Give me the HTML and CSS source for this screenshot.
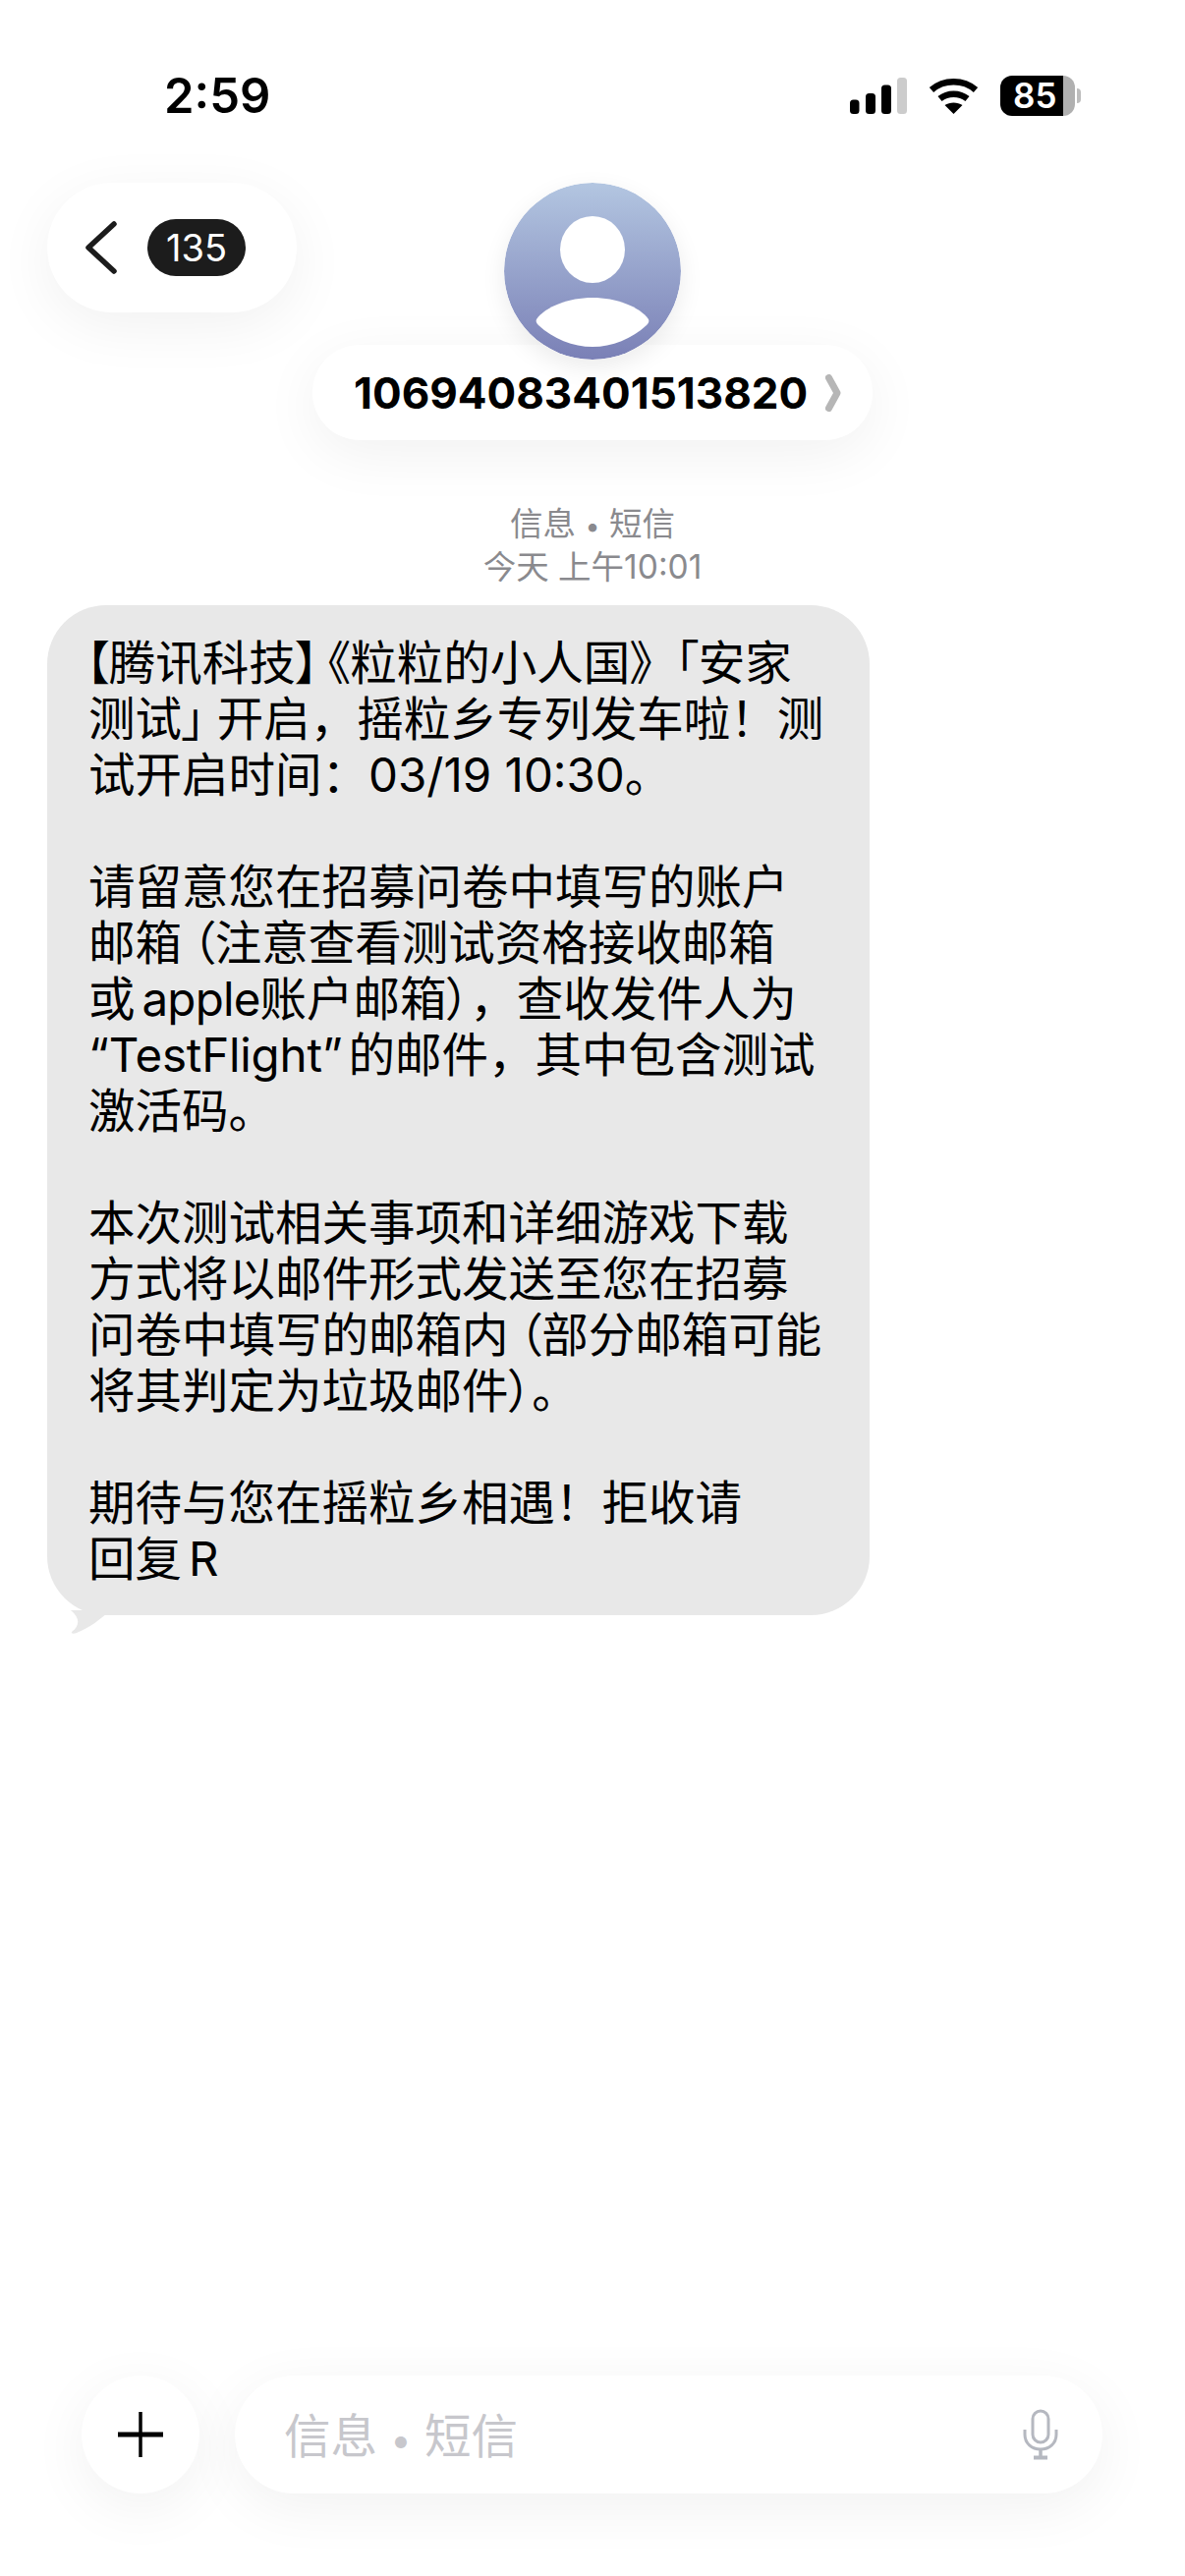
FILE: index.html
```html
<!DOCTYPE html>
<html lang="zh-CN">
<head>
    <meta charset="UTF-8">
    <meta name="viewport" content="width=device-width, initial-scale=1.0">
    <title>短信</title>
    <link rel="stylesheet" href="styles.css">
</head>
<body>
    <div class="status-bar">
        <span class="time">2:59</span>
        <div class="status-icons">
            <svg class="signal" width="58" height="37" viewBox="0 0 58 37">
                <rect x="0" y="22.500" width="9.500" height="14.500" rx="3.500" fill="#000"/>
                <rect x="16" y="16" width="10" height="21" rx="3.500" fill="#000"/>
                <rect x="32" y="7.500" width="10" height="29.500" rx="3.500" fill="#000"/>
                <rect x="48" y="0" width="10" height="37" rx="3.500" fill="#ccc"/>
            </svg>
            <svg class="wifi" width="51" height="37" viewBox="0 0 51 37">
                <path d="M3 12.500C15.500 1.500 35.500 1.500 48 12.500" fill="none" stroke="#000" stroke-width="6.500" stroke-linecap="butt"/>
                <path d="M11.500 21.500C19.500 15 31.500 15 39.500 21.500" fill="none" stroke="#000" stroke-width="6.500" stroke-linecap="butt"/>
                <path d="M25.500 37L16.500 28C21.500 24.500 29.500 24.500 34.500 28Z" fill="#000"/>
            </svg>
            <div class="battery"><span>85</span></div>
        </div>
    </div>

    <header class="top-nav">
        <div class="back-pill">
            <svg width="32" height="54" viewBox="0 0 32 54">
                <path d="M29 3L3 27L29 51" fill="none" stroke="#1c1c1c" stroke-width="5.500" stroke-linecap="round" stroke-linejoin="round"/>
            </svg>
            <span class="badge">135</span>
        </div>
        <div class="contact">
            <svg class="avatar" width="180" height="180" viewBox="0 0 180 180">
                <defs>
                    <linearGradient id="avatar-bg" x1="0" y1="0" x2="0" y2="1">
                        <stop offset="0" stop-color="#b3c6e1"/>
                        <stop offset="1" stop-color="#7a80b6"/>
                    </linearGradient>
                </defs>
                <circle cx="90" cy="90" r="90" fill="url(#avatar-bg)"/>
                <ellipse cx="90" cy="68" rx="33" ry="34" fill="#fff"/>
                <path d="M33 139C42 126 66 117 90 117C114 117 138 126 147 139C148 141 147 143 145 145C130 159 110 167 90 167C70 167 50 159 35 145C33 143 32 141 33 139Z" fill="#fff"/>
            </svg>
            <div class="name-pill">
                <span class="number">10694083401513820</span>
                <svg width="16" height="38" viewBox="0 0 16 38">
                    <path d="M3.500 3.500L12 19L3.500 34.500" fill="none" stroke="#b6b6b6" stroke-width="7" stroke-linecap="round" stroke-linejoin="round"/>
                </svg>
            </div>
        </div>
    </header>

    <main class="thread">
        <div class="meta">
            <div>信息 <span class="dot">•</span> 短信</div>
            <div>今天 上午10:01</div>
        </div>
        <div class="bubble">
            <p><span class="tight flush">【</span>腾讯科技<span class="tight close-sm">】</span><span class="tight">《</span>粒粒的小人国<span class="tight close">》</span><span class="tight open">「</span>安家<br>测试<span class="tight close">」</span>开启，摇粒乡专列发车啦！测<br>试开启时间：03/19 10:30。</p>
            <p>请留意您在招募问卷中填写的账户<br>邮箱<span class="tight open">（</span>注意查看测试资格接收邮箱<br>或<span class="latin">apple</span>账户邮箱<span class="tight">）</span>，查收发件人为<br><span class="quoted">“TestFlight”</span>的邮件，其中包含测试<br>激活码。</p>
            <p>本次测试相关事项和详细游戏下载<br>方式将以邮件形式发送至您在招募<br>问卷中填写的邮箱内<span class="tight open">（</span>部分邮箱可能<br>将其判定为垃圾邮件<span class="tight">）</span>。</p>
            <p>期待与您在摇粒乡相遇！拒收请<br>回复<span class="latin">R</span></p>
            <svg class="tail" width="42" height="24" viewBox="0 0 42 24">
                <path d="M0 0C10 8 9 16 1 22C0 24 3 24 6 23C18 18 30 10 40 0Z" fill="#e8e8e8"/>
            </svg>
        </div>
    </main>

    <footer class="composer">
        <div class="plus-btn">
            <svg width="46" height="46" viewBox="0 0 46 46">
                <path d="M23 0V46" stroke="#000" stroke-width="3.500" stroke-linecap="round"/>
                <path d="M0 23H46" stroke="#000" stroke-width="5" stroke-linecap="round"/>
            </svg>
        </div>
        <div class="input-pill">
            <span class="placeholder">信息 <span class="dot">•</span> 短信</span>
            <svg width="36" height="52" viewBox="0 0 36 52">
                <rect x="10" y="2" width="16" height="32" rx="8" fill="none" stroke="#b5b8c0" stroke-width="3"/>
                <path d="M2 21V26C2 35 9 41 18 41C27 41 34 35 34 26V21" fill="none" stroke="#b5b8c0" stroke-width="3"/>
                <path d="M18 41V49" stroke="#b5b8c0" stroke-width="3.500"/>
                <path d="M11 49.500H25" stroke="#b5b8c0" stroke-width="4"/>
            </svg>
        </div>
    </footer>
</body>
</html>
```

FILE: styles.css
```css
* {
    box-sizing: border-box;
}

body {
    margin: 0;
    width: 1206px;
    height: 2622px;
    background: #fff;
    color: #000;
    font-family: 'Inter', 'Noto Sans CJK SC', sans-serif;
    display: flex;
    flex-direction: column;
    overflow: hidden;
}

.status-bar {
    display: flex;
    justify-content: space-between;
    align-items: center;
    height: 41px;
    margin-top: 77px;
    padding: 0 112px 0 167px;
}

.time {
    font-size: 49px;
    font-weight: 600;
    line-height: 41px;
}

.status-icons {
    display: flex;
    align-items: center;
    gap: 22px;
}

.battery {
    position: relative;
    width: 76px;
    height: 41px;
    border-radius: 12px;
    background: linear-gradient(90deg, #000 84%, #b0b0b0 84%);
    color: #fff;
    font-size: 35px;
    font-weight: 600;
    line-height: 41px;
    padding-left: 13px;
}

.battery::after {
    content: "";
    position: absolute;
    right: -6px;
    top: 13px;
    width: 4px;
    height: 15px;
    border-radius: 0 8px 8px 0;
    background: #bdbdbd;
}

.top-nav {
    display: grid;
    grid-template-columns: 1fr auto 1fr;
    align-items: start;
    margin-top: 68px;
    padding: 0 48px;
}

.back-pill {
    justify-self: start;
    display: flex;
    align-items: center;
    gap: 31px;
    width: 254px;
    height: 132px;
    padding-left: 39px;
    border-radius: 66px;
    background: #fff;
    box-shadow: 0 14px 60px rgba(0, 0, 0, 0.06);
}

.badge {
    width: 100px;
    height: 58px;
    border-radius: 29px;
    background: #1c1c1c;
    color: #fff;
    font-size: 38px;
    line-height: 58px;
    text-align: center;
}

.contact {
    display: flex;
    flex-direction: column;
    align-items: center;
    grid-column: 2;
}

.avatar {
    position: relative;
    z-index: 1;
    border-radius: 50%;
    box-shadow: 0 8px 24px rgba(0, 0, 0, 0.08);
}

.name-pill {
    display: flex;
    align-items: center;
    gap: 18px;
    width: 570px;
    height: 97px;
    margin-top: -15px;
    padding-left: 42px;
    border-radius: 48px;
    background: #fff;
    box-shadow: 0 14px 60px rgba(0, 0, 0, 0.06);
}

.number {
    font-size: 44px;
    font-weight: 700;
}

.thread {
    flex: 1;
    padding: 64px 48px 0;
}

.meta {
    color: #8a8a8e;
    font-size: 33.500px;
    line-height: 42px;
    text-align: center;
}

.dot {
    font-size: 0.8em;
}

.bubble {
    position: relative;
    width: 837px;
    margin-top: 18px;
    padding: 30px 0 29px 42px;
    border-radius: 60px;
    background: #e8e8e8;
    font-size: 47.500px;
    line-height: 57px;
    white-space: nowrap;
}

.bubble p {
    margin: 0 0 57px;
}

.bubble p:last-of-type {
    margin-bottom: 0;
}

/* PingFang squeezes the brackets, so only those get palt */
.tight {
    font-feature-settings: "palt";
}

.flush {
    margin-left: -3px;
}

.open {
    padding-left: 10px;
}

.close {
    padding-right: 12px;
}

.close-sm {
    padding-right: 8px;
}

.latin {
    margin-left: 7px;
    letter-spacing: -0.800px;
}

.quoted {
    margin-right: 6px;
    letter-spacing: -0.200px;
}

.tail {
    position: absolute;
    left: 24px;
    bottom: -19px;
}

.composer {
    display: flex;
    gap: 36px;
    padding: 0 84px 84px 83px;
}

.plus-btn {
    display: flex;
    align-items: center;
    justify-content: center;
    flex: none;
    width: 120px;
    height: 120px;
    border-radius: 50%;
    background: #fff;
    box-shadow: 0 14px 60px rgba(0, 0, 0, 0.06);
}

.input-pill {
    flex: 1;
    display: flex;
    align-items: center;
    justify-content: space-between;
    height: 120px;
    padding: 0 45px 0 50px;
    border-radius: 60px;
    background: #fff;
    box-shadow: 0 14px 60px rgba(0, 0, 0, 0.06);
}

.placeholder {
    padding-bottom: 4px;
    color: #c7c7cc;
    font-size: 47.500px;
}
```
